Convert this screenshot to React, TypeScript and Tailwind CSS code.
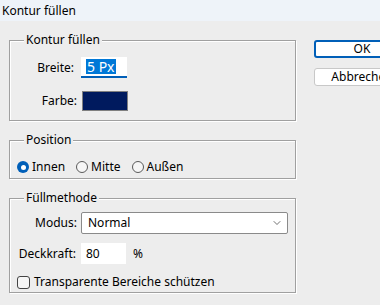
import { ChevronDown } from "lucide-react";

const font = { fontFamily: '"Noto Sans", "Open Sans", sans-serif' };

function Group({
  title,
  className,
  children,
}: {
  title: string;
  className: string;
  children: React.ReactNode;
}) {
  return (
    <div
      className={`relative border border-[#a0a0a0] shadow-[1px_1px_0_#fff,inset_1px_1px_0_#fff] ${className}`}
    >
      <span className="absolute left-[14px] top-[-9px] bg-[#ededed] px-[2px] text-[12px] leading-[16px] text-black">
        {title}
      </span>
      {children}
    </div>
  );
}

function Radio({ label, checked }: { label: string; checked?: boolean }) {
  return (
    <label className="flex items-center gap-[3px]">
      {checked ? (
        <span className="flex h-[12px] w-[12px] items-center justify-center rounded-full bg-[#005fb8]">
          <span className="h-[5px] w-[5px] rounded-full bg-white" />
        </span>
      ) : (
        <span className="h-[12px] w-[12px] rounded-full border border-[#5a5a5a] bg-[#f6f6f6]" />
      )}
      <span>{label}</span>
    </label>
  );
}

export default function App() {
  return (
    <div
      className="h-[305px] w-[380px] overflow-hidden bg-[#ededed] text-[12px] leading-[16px] text-black"
      style={font}
    >
      {/* Titelleiste */}
      <div className="flex h-[21px] items-center bg-[#eef3f9] pl-[2px]">
        Kontur füllen
      </div>

      <div className="flex pl-[9px] pt-[19px]">
        {/* linke Spalte */}
        <div className="flex w-[287px] shrink-0 flex-col">
          <Group title="Kontur füllen" className="h-[81px]">
            <div className="flex flex-col pt-[16px]">
              <div className="flex items-center">
                <span className="w-[64px] text-right">Breite:</span>
                <div className="ml-[7px] flex h-[21px] w-[46px] items-center border-b-2 border-[#005fb8] bg-white pl-[5px]">
                  <span className="bg-[#0078d7] px-[1px] text-[14px] leading-[15px] text-white">
                    5 Px
                  </span>
                </div>
              </div>
              <div className="mt-[13px] flex items-center">
                <span className="w-[67px] text-right">Farbe:</span>
                <div className="ml-[5px] h-[20px] w-[46px] border border-[#808080] bg-[#001a5e]" />
              </div>
            </div>
          </Group>

          <Group title="Position" className="mt-[19px] h-[39px]">
            <div className="flex items-center gap-[11px] pl-[7px] pt-[18px]">
              <Radio label="Innen" checked />
              <Radio label="Mitte" />
              <Radio label="Außen" />
            </div>
          </Group>

          <Group title="Füllmethode" className="mt-[19px] h-[95px]">
            <div className="flex flex-col pt-[13px]">
              <div className="flex items-center">
                <span className="w-[67px] text-right">Modus:</span>
                <div className="ml-[4px] flex h-[22px] w-[207px] items-center justify-between rounded-[2px] border border-[#8a8a8a] bg-white pl-[6px] pr-[4px]">
                  <span>Normal</span>
                  <ChevronDown size={12} strokeWidth={1.4} className="text-[#333]" />
                </div>
              </div>
              <div className="mt-[9px] flex items-center">
                <span className="w-[66px] text-right">Deckkraft:</span>
                <div className="ml-[5px] flex h-[21px] w-[45px] items-center bg-white pl-[5px]">
                  80
                </div>
                <span className="ml-[7px]">%</span>
              </div>
              <label className="mt-[10px] flex items-center gap-[4px] pl-[7px]">
                <span className="h-[13px] w-[13px] rounded-[3px] border border-[#444] bg-[#f6f6f6]" />
                <span>Transparente Bereiche schützen</span>
              </label>
            </div>
          </Group>
        </div>

        {/* Buttons */}
        <div className="ml-[18px] flex shrink-0 flex-col gap-[10px]">
          <button className="h-[18px] w-[96px] rounded-[3px] border-2 border-[#005fb8] bg-white text-center leading-[14px]">
            OK
          </button>
          <button className="h-[18px] w-[96px] rounded-[3px] border border-[#c8c8c8] bg-white text-center leading-[16px]">
            Abbrechen
          </button>
        </div>
      </div>
    </div>
  );
}
